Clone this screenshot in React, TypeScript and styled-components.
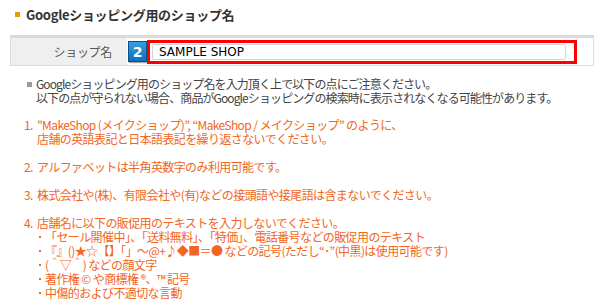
import styled, { createGlobalStyle } from "styled-components";

const GlobalStyle = createGlobalStyle`
  html, body {
    margin: 0;
    padding: 0;
    background: #fff;
  }
  body {
    font-family: "Noto Sans CJK JP", "DejaVu Sans", sans-serif;
    font-size: 12px;
    color: #333;
  }
`;

const Page = styled.div`
  width: 605px;
  height: 307px;
  overflow: hidden;
`;

const Heading = styled.h2`
  display: flex;
  align-items: center;
  gap: 6px;
  margin: 0;
  padding: 2px 0 0 15px;
  height: 24px;
  font-size: 13px;
  font-weight: bold;
  color: #333;
  letter-spacing: -0.3px;

  &::before {
    content: "";
    width: 5px;
    height: 5px;
    background: #f39800;
  }
`;

const Row = styled.div`
  display: flex;
  margin: 9px 11px 0 10px;
  height: 27px;
  border: 1px solid #dcdcdc;
  border-top: 3px solid #d9d9d9;
`;

const Label = styled.div`
  width: 116px;
  background: #efefef;
  display: flex;
  align-items: center;
  justify-content: flex-end;
  padding-right: 15px;
  box-sizing: border-box;
  color: #555;
  letter-spacing: -0.3px;
`;

const Value = styled.div`
  flex: 1;
  display: flex;
  align-items: center;
  padding-left: 1px;
`;

const Badge = styled.span`
  width: 19px;
  height: 21px;
  box-sizing: border-box;
  border: 1px solid #0b4f86;
  background: linear-gradient(#3a9de0, #0d6fbe);
  color: #fff;
  font-family: "DejaVu Sans", sans-serif;
  font-weight: bold;
  font-size: 14px;
  display: flex;
  align-items: center;
  justify-content: center;
  box-shadow: 1px 1px 1px rgba(0, 0, 0, 0.35);
`;

const Highlight = styled.div`
  width: 430px;
  height: 24px;
  box-sizing: border-box;
  border: 3px solid #ff0000;
  padding: 1px 8px 1px 2px;
  display: flex;
`;

const Field = styled.div`
  flex: 1;
  border: 1px solid #cfd3dc;
  border-radius: 2px;
  background: #fff;
  display: flex;
  align-items: center;
  padding-left: 6px;
  font-family: "DejaVu Sans", sans-serif;
  font-size: 12px;
  color: #000;
`;

const Intro = styled.div`
  margin: 11px 0 0 27px;
  line-height: 14px;
  letter-spacing: -0.9px;
  color: #444;
`;

const IntroLine = styled.div<{ $bullet?: boolean }>`
  display: flex;
  align-items: center;
  height: 14px;
  padding-left: ${(p) => (p.$bullet ? 0 : 9)}px;

  &::before {
    content: "";
    display: ${(p) => (p.$bullet ? "block" : "none")};
    width: 5px;
    height: 5px;
    margin-right: 4px;
    background: #999;
  }
`;

const Rules = styled.ol`
  list-style: none;
  margin: 13px 0 0 24px;
  padding: 0;
  color: #f26522;
  line-height: 14px;
  letter-spacing: -0.6px;
`;

const Rule = styled.li`
  display: flex;
  margin-bottom: 14px;
`;

const Num = styled.span`
  width: 13px;
  flex-shrink: 0;
`;

const Sub = styled.div`
  display: flex;
  align-items: center;
  height: 14px;

  &::before {
    content: "";
    width: 2px;
    height: 2px;
    margin: 0 4px 0 2px;
    background: #f26522;
  }
`;

export default function App() {
  return (
    <Page>
      <GlobalStyle />
      <Heading>Googleショッピング用のショップ名</Heading>
      <Row>
        <Label>ショップ名</Label>
        <Value>
          <Badge>2</Badge>
          <Highlight>
            <Field>SAMPLE SHOP</Field>
          </Highlight>
        </Value>
      </Row>
      <Intro>
        <IntroLine $bullet>Googleショッピング用のショップ名を入力頂く上で以下の点にご注意ください。</IntroLine>
        <IntroLine>以下の点が守られない場合、商品がGoogleショッピングの検索時に表示されなくなる可能性があります。</IntroLine>
      </Intro>
      <Rules>
        <Rule>
          <Num>1.</Num>
          <div>
            <div>”MakeShop (メイクショップ)”, “MakeShop / メイクショップ” のように、</div>
            <div>店舗の英語表記と日本語表記を繰り返さないでください。</div>
          </div>
        </Rule>
        <Rule>
          <Num>2.</Num>
          <div>アルファベットは半角英数字のみ利用可能です。</div>
        </Rule>
        <Rule>
          <Num>3.</Num>
          <div>株式会社や(株)、有限会社や(有)などの接頭語や接尾語は含まないでください。</div>
        </Rule>
        <Rule>
          <Num>4.</Num>
          <div>
            <div>店舗名に以下の販促用のテキストを入力しないでください。</div>
            <Sub>「セール開催中」、「送料無料」、「特価」、電話番号などの販促用のテキスト</Sub>
            <Sub>『』()★☆【】「」～@+♪◆■＝● などの記号(ただし“･”(中黒)は使用可能です)</Sub>
            <Sub>(＾▽＾) などの顔文字</Sub>
            <Sub>著作権 © や商標権 ®、™ 記号</Sub>
            <Sub>中傷的および不適切な言動</Sub>
          </div>
        </Rule>
      </Rules>
    </Page>
  );
}
